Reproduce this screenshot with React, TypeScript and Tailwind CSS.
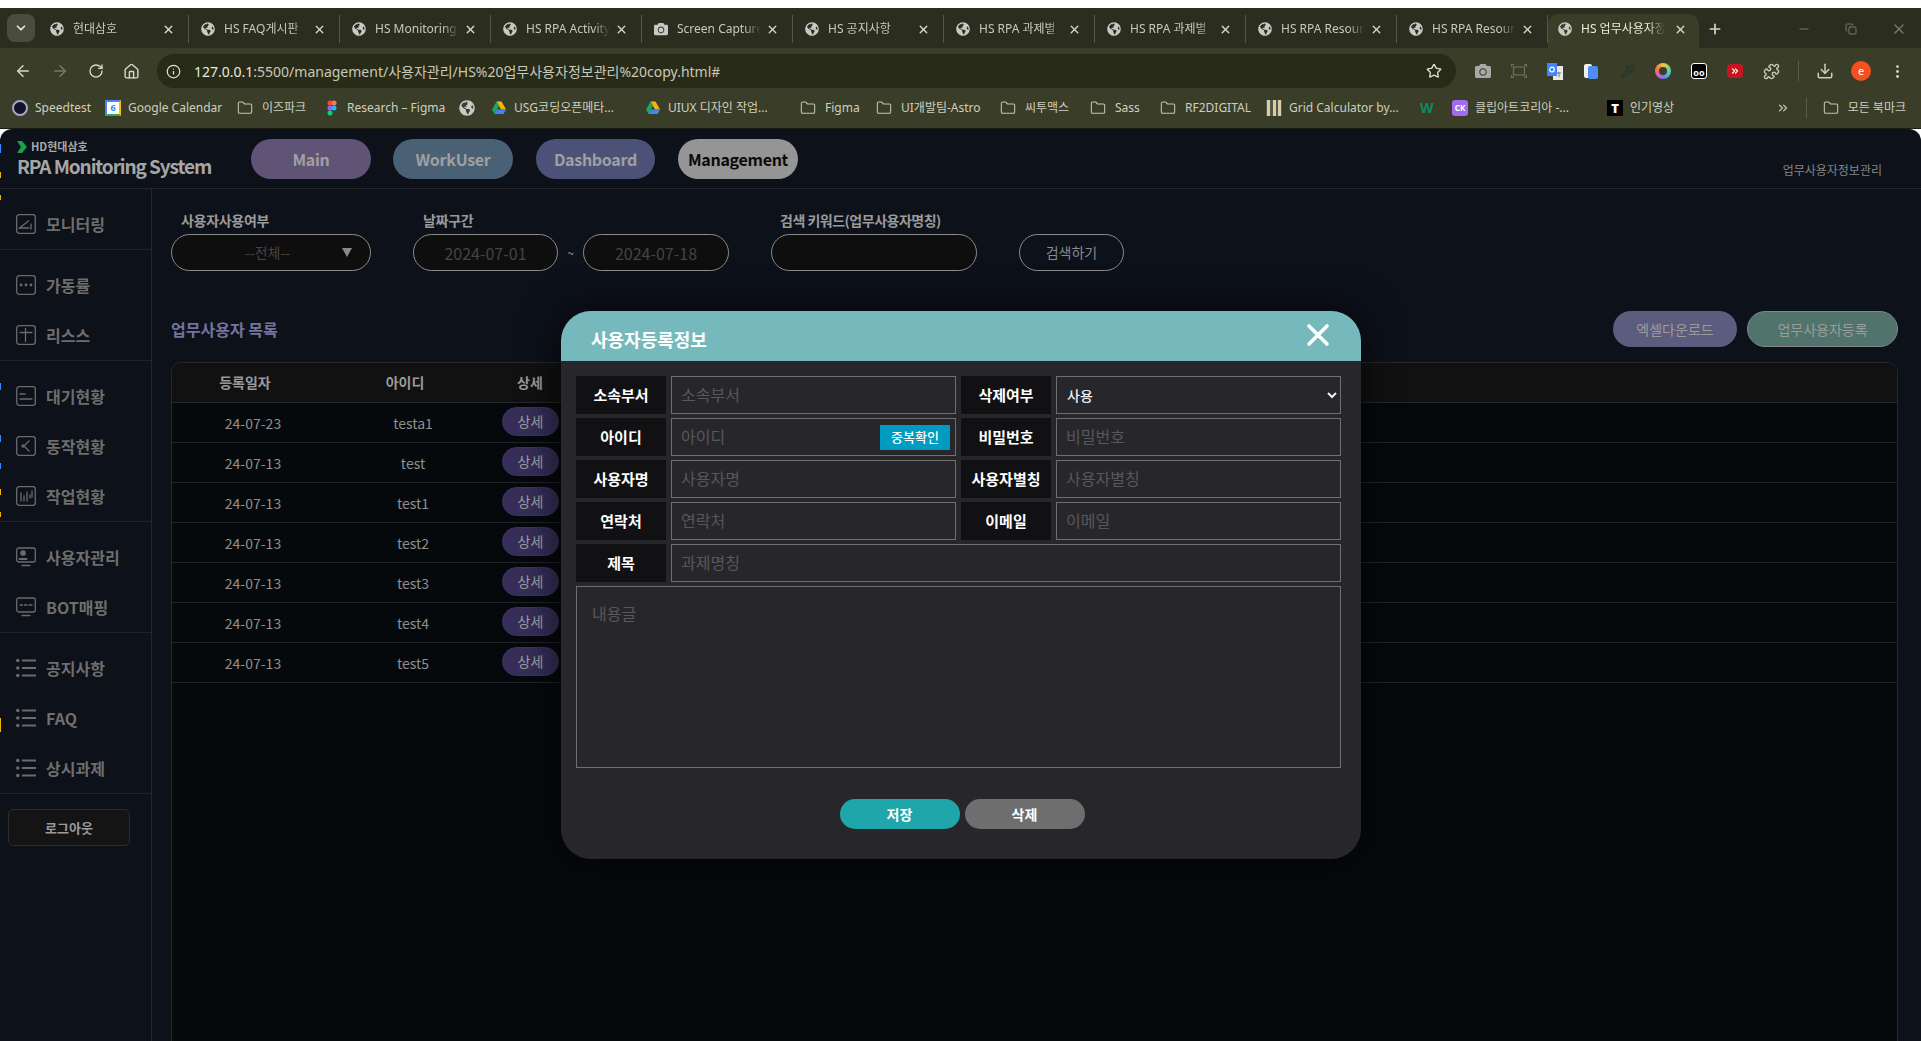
import { ArrowLeft, ArrowRight, Download, EllipsisVertical, Home, Info, Minus, Pipette, Plus, RotateCw, Star, X, Puzzle, Copy, ChevronDown, Folder, ChevronsRight } from 'lucide-react';
import { FaCamera, FaGlobeAmericas } from 'react-icons/fa';

const tabs = ['현대삼호', 'HS FAQ게시판', 'HS Monitoring', 'HS RPA Activity', 'Screen Capture', 'HS 공지사항', 'HS RPA 과제별', 'HS RPA 과제별', 'HS RPA Resource', 'HS RPA Resource'];

const Globe = ({ size = 14 }: { size?: number }) => <FaGlobeAmericas size={size} className="shrink-0 text-[#c8c8c4]" />;

const Tab = ({ title, active, icon }: { title: string; active?: boolean; icon?: React.ReactNode }) => (
  <div className={active ? 'flex h-[34px] w-[151px] items-center self-end rounded-t-[10px] bg-[#3a3d28] pb-[4px] pl-[10px] pr-[12px] text-[#ecebdc]' : 'flex h-[28px] w-[151px] items-center border-r border-[#55574a] pl-[12px] pr-[13px] text-[#c9c9ba]'}>
    {icon ?? <Globe />}
    <span className="ml-[9px] w-[84px] overflow-hidden whitespace-nowrap text-[12px] [mask-image:linear-gradient(to_right,black_80%,transparent)]">{title}</span>
    <X size={13} strokeWidth={2.5} className="ml-auto text-[#d6d6c8]" />
  </div>
);

const FolderIcon = () => <Folder size={16} strokeWidth={1.6} className="mr-[2px] shrink-0 text-[#c4c4b4]" />;

const Drive = () => (
  <svg width="16" height="16" viewBox="0 0 16 16" className="shrink-0">
    <path d="M5.5 1.5h5L15 9.5h-5z" fill="#f6b704" />
    <path d="M5.5 1.5 1 9.5 3.5 14 8 6z" fill="#1fa463" />
    <path d="M3.5 14h9l2.500-4.500H6z" fill="#4285f4" />
  </svg>
);

const bookmarks: { w: string; label?: string; icon: React.ReactNode }[] = [
  { w: 'w-[93px]', label: 'Speedtest', icon: <span className="h-[16px] w-[16px] shrink-0 rounded-full border-2 border-[#a5a8c8] bg-[#12122a]" /> },
  { w: 'w-[132px]', label: 'Google Calendar', icon: <span className="flex h-[16px] w-[16px] shrink-0 items-center justify-center border-2 border-[#4285f4] border-r-[#fbbc04] border-b-[#34a853] bg-white text-[9px] font-bold text-[#4285f4]">6</span> },
  { w: 'w-[87px]', label: '이즈파크', icon: <FolderIcon /> },
  {
    w: 'w-[135px]',
    label: 'Research – Figma',
    icon: (
      <svg width="16" height="16" viewBox="0 0 16 16" className="shrink-0">
        <circle cx="6" cy="3" r="2.500" fill="#f24e1e" />
        <circle cx="10" cy="3" r="2.500" fill="#ff7262" />
        <circle cx="6" cy="8" r="2.500" fill="#a259ff" />
        <circle cx="10" cy="8" r="2.500" fill="#1abcfe" />
        <circle cx="6" cy="13" r="2.500" fill="#0acf83" />
      </svg>
    ),
  },
  { w: 'w-[32px]', icon: <Globe size={16} /> },
  { w: 'w-[154px]', label: 'USG코딩오픈메타...', icon: <Drive /> },
  { w: 'w-[155px]', label: 'UIUX 디자인 작업...', icon: <Drive /> },
  { w: 'w-[76px]', label: 'Figma', icon: <FolderIcon /> },
  { w: 'w-[124px]', label: 'UI개발팀-Astro', icon: <FolderIcon /> },
  { w: 'w-[90px]', label: '씨투맥스', icon: <FolderIcon /> },
  { w: 'w-[70px]', label: 'Sass', icon: <FolderIcon /> },
  { w: 'w-[106px]', label: 'RF2DIGITAL', icon: <FolderIcon /> },
  {
    w: 'w-[154px]',
    label: 'Grid Calculator by...',
    icon: (
      <span className="flex h-[16px] w-[16px] shrink-0 justify-between bg-[#55574a] px-[1px]">
        <span className="w-[3px] bg-[#d8cfa0]" />
        <span className="w-[3px] bg-[#d8cfa0]" />
        <span className="w-[3px] bg-[#d8cfa0]" />
      </span>
    ),
  },
  { w: 'w-[32px]', icon: <span className="w-[16px] text-[14px] font-bold leading-none text-[#0f8a5f]">W</span> },
  { w: 'w-[155px]', label: '클립아트코리아 -...', icon: <span className="flex h-[16px] w-[16px] shrink-0 items-center justify-center rounded-[3px] bg-[#a26bf0] text-[8px] font-bold text-white">CK</span> },
  { w: 'w-[100px]', label: '인기영상', icon: <span className="flex h-[16px] w-[16px] shrink-0 items-center justify-center bg-black text-[13px] font-black leading-none text-white">T</span> },
];

const Box = ({ children }: { children: React.ReactNode }) => (
  <svg width="20" height="20" viewBox="0 0 20 20" fill="none" stroke="#6b6b6b" strokeWidth="1.3" strokeLinecap="round" className="shrink-0">
    <rect x="0.7" y="0.7" width="18.600" height="18.600" rx="2.500" />
    {children}
  </svg>
);

const ScreenIcon = ({ children }: { children: React.ReactNode }) => (
  <svg width="20" height="20" viewBox="0 0 20 20" fill="none" stroke="#6b6b6b" strokeWidth="1.3" strokeLinecap="round" className="shrink-0">
    <rect x="0.7" y="1" width="18.600" height="14" rx="2" />
    <path d="M6 18.500h8" />
    {children}
  </svg>
);

const ListIcon = () => (
  <svg width="20" height="20" viewBox="0 0 20 20" className="shrink-0" fill="#6b6b6b">
    <circle cx="1.800" cy="2.500" r="1.800" />
    <circle cx="1.800" cy="10" r="1.800" />
    <circle cx="1.800" cy="17.500" r="1.800" />
    <rect x="6" y="1.500" width="14" height="2" />
    <rect x="6" y="9" width="14" height="2" />
    <rect x="6" y="16.500" width="14" height="2" />
  </svg>
);

const sideGroups: { label: string; icon: React.ReactNode }[][] = [
  [{ label: '모니터링', icon: <Box><path d="M3.500 14 13 6.500 3.500 14h9.500M15 10v5" /></Box> }],
  [
    {
      label: '가동률',
      icon: (
        <Box>
          <circle cx="5" cy="10" r="1.400" fill="#6b6b6b" stroke="none" />
          <circle cx="10" cy="10" r="1.400" fill="#6b6b6b" stroke="none" />
          <circle cx="15" cy="10" r="1.400" fill="#6b6b6b" stroke="none" />
        </Box>
      ),
    },
    { label: '리스스', icon: <Box><path d="M4 7.500h12M9.500 3.500V16.500" /></Box> },
  ],
  [
    { label: '대기현황', icon: <Box><path d="M4 8h5M4 13h12" /></Box> },
    { label: '동작현황', icon: <Box><path d="m13 5-5 5 5 5" /><circle cx="7" cy="10" r="1" /></Box> },
    { label: '작업현황', icon: <Box><path d="M5 7v8M8 10v5M11 6v9M14 9v3M16 5v6" /></Box> },
  ],
  [
    { label: '사용자관리', icon: <ScreenIcon><circle cx="7" cy="6" r="2.200" fill="#6b6b6b" /><path d="M3.500 12h7" strokeWidth="2" /></ScreenIcon> },
    { label: 'BOT매핑', icon: <ScreenIcon><path d="M4 8h2.500M8.500 8H11M13 8h3" /></ScreenIcon> },
  ],
  [
    { label: '공지사항', icon: <ListIcon /> },
    { label: 'FAQ', icon: <ListIcon /> },
    { label: '상시과제', icon: <ListIcon /> },
  ],
];

const rows = [
  ['24-07-23', 'testa1'],
  ['24-07-13', 'test'],
  ['24-07-13', 'test1'],
  ['24-07-13', 'test2'],
  ['24-07-13', 'test3'],
  ['24-07-13', 'test4'],
  ['24-07-13', 'test5'],
];

const edgeMarks = [
  'top-[144px] h-[9px] bg-[#2f8cff]',
  'top-[172px] h-[6px] bg-[#f0b400]',
  'top-[195px] h-[5px] bg-[#f0b400]',
  'top-[383px] h-[7px] bg-[#2f8cff]',
  'top-[435px] h-[7px] bg-[#2f8cff]',
  'top-[463px] h-[6px] bg-[#2f8cff]',
  'top-[489px] h-[6px] bg-[#f0b400]',
  'top-[512px] h-[5px] bg-[#f0b400]',
  'top-[718px] h-[14px] bg-[#f0b400]',
];

const toolbarIcons: React.ReactNode[] = [
  <FaCamera size={16} className="text-[#a8a8a4]" />,
  <svg width="16" height="14" viewBox="0 0 16 14" fill="none" stroke="#6e705f" strokeWidth="1.2">
    <rect x="2.500" y="3" width="11" height="8" />
    <path d="M0.600 3V0.600H3M13 0.600h2.400V3M0.600 11v2.400H3M13 13.400h2.400V11" />
  </svg>,
  <svg width="16" height="17" viewBox="0 0 16 17">
    <rect x="6" y="3" width="10" height="14" fill="#e8e8e8" />
    <rect width="10" height="13" fill="#4285f4" />
    <circle cx="5" cy="6.500" r="2.300" fill="none" stroke="white" strokeWidth="1.200" />
    <path d="M10 10h4M12 9v5" stroke="#777" strokeWidth="1" />
  </svg>,
  <svg width="14" height="15" viewBox="0 0 14 15">
    <rect width="8" height="14" rx="2" fill="#f0f0f0" />
    <rect x="4" y="2" width="10" height="13" rx="2" fill="#4f8df0" />
  </svg>,
  <Pipette size={15} strokeWidth={2} className="text-[#1e3a2c]" />,
  <span className="flex h-[16px] w-[16px] items-center justify-center rounded-full bg-[conic-gradient(#f6c445,#7ed37a,#45c4d8,#7a6ff0,#e85fa8,#f08040,#f6c445)]">
    <span className="h-[8px] w-[8px] rounded-full bg-[#3a3d28]" />
  </span>,
  <span className="flex h-[16px] w-[16px] items-end justify-center rounded-[3px] border border-white bg-black pb-[1px] text-[9px] font-bold leading-[8px] text-white">oo</span>,
  <span className="flex h-[14px] w-[16px] items-center justify-center rounded-[4px] bg-[#c8141e] text-white">
    <ChevronsRight size={10} strokeWidth={3} />
  </span>,
  <Puzzle size={17} className="text-[#c8c8b0]" />,
];

const FormLabel = ({ children }: { children: React.ReactNode }) => (
  <div className="flex items-center justify-center bg-[#111114] text-[15px] font-bold text-white">{children}</div>
);

const FormInput = ({ placeholder, className }: { placeholder: string; className?: string }) => (
  <input placeholder={placeholder} className={`h-[38px] w-full border border-[#6f6f72] bg-transparent pl-[9px] text-[16px] text-white outline-none placeholder:text-[#58585a] ${className ?? ''}`} />
);

const NavPill = ({ label, className }: { label: string; className: string }) => (
  <button className={`flex h-[40px] items-center justify-center rounded-full text-[16px] font-bold tracking-[-0.3px] ${className}`}>{label}</button>
);

export default function App() {
  return (
    <div className="relative flex h-screen w-full flex-col overflow-hidden bg-white font-['Noto_Sans','Noto_Sans_CJK_KR',sans-serif]">
      {/* browser chrome */}
      <div className="mt-[8px] flex h-[40px] shrink-0 items-end bg-[#2b2e1e] pl-[7px]">
        <div className="mb-[6px] flex h-[28px] w-[28px] items-center justify-center rounded-[8px] bg-[#4a4c3d] text-[#e8e8dc]">
          <ChevronDown size={14} strokeWidth={3} />
        </div>
        <div className="ml-[3px] flex h-[40px] items-center pt-[2px]">
          {tabs.map((t, i) => (
            <Tab key={i} title={t} icon={i === 4 ? <FaCamera size={14} className="shrink-0 text-[#c8c8c4]" /> : undefined} />
          ))}
          <Tab title="HS 업무사용자정보관리" active />
          <Plus size={16} strokeWidth={2.5} className="ml-[8px] text-[#d8d8c8]" />
        </div>
        <div className="mb-[11px] ml-auto flex items-center gap-[34px] pr-[14px] text-[#77796a]">
          <Minus size={14} />
          <Copy size={12} />
          <X size={16} />
        </div>
      </div>
      <div className="flex h-[40px] shrink-0 items-center bg-[#3a3d28] pl-[14px] pr-[6px] pt-[6px]">
        <div className="flex items-center gap-[19px] text-[#d8d8c8]">
          <ArrowLeft size={18} />
          <ArrowRight size={18} className="text-[#77796a]" />
          <RotateCw size={16} />
          <Home size={17} />
        </div>
        <div className="ml-[17px] flex h-[34px] w-[1299px] items-center rounded-full bg-[#282b17] pl-[9px] pr-[14px]">
          <Info size={15} className="text-[#e0e0d0]" />
          <span className="ml-[13px] text-[14px] text-[#e8e8dc]">
            127.0.0.1<span className="text-[#c8c8b8]">:5500/management/사용자관리/HS%20업무사용자정보관리%20copy.html#</span>
          </span>
          <Star size={16} className="ml-auto text-[#e0e0d0]" />
        </div>
        <div className="ml-auto flex items-center">
          {toolbarIcons.map((icon, i) => (
            <div key={i} className="flex w-[36px] justify-center">
              {icon}
            </div>
          ))}
          <div className="flex w-[18px] justify-center">
            <span className="h-[20px] w-px bg-[#5c5e4c]" />
          </div>
          <div className="flex w-[36px] justify-center">
            <Download size={18} className="text-[#d0d0b8]" />
          </div>
          <div className="flex w-[36px] justify-center">
            <span className="flex h-[20px] w-[20px] items-center justify-center rounded-full bg-[#f4511e] text-[11px] text-white">e</span>
          </div>
          <div className="flex w-[36px] justify-center">
            <EllipsisVertical size={17} className="text-[#d8d8c8]" />
          </div>
        </div>
      </div>
      <div className="flex h-[41px] shrink-0 items-center border-b border-[#1a1b12] bg-[#3a3d28] pl-[12px] pr-[15px] text-[12px] text-[#cfcfbf]">
        {bookmarks.map((b, i) => (
          <div key={i} className={`flex items-center gap-[7px] ${b.w}`}>
            {b.icon}
            {b.label && <span className="whitespace-nowrap">{b.label}</span>}
          </div>
        ))}
        <div className="ml-auto flex items-center gap-[16px]">
          <ChevronsRight size={14} />
          <span className="h-[20px] w-px bg-[#5c5e4c]" />
          <div className="flex items-center gap-[7px]">
            <FolderIcon />
            <span className="whitespace-nowrap">모든 북마크</span>
          </div>
        </div>
      </div>

      {/* app */}
      <div className="relative flex min-h-0 flex-1 flex-col overflow-hidden rounded-t-[12px] bg-[#0d111a] font-['Noto_Sans_CJK_KR',sans-serif]">
        <header className="flex h-[60px] shrink-0 items-center border-b border-[#24272e] pl-[17px] pr-[39px]">
          <div className="w-[234px]">
            <div className="flex items-center gap-[4px] text-[11px] font-bold leading-[15px] text-[#a8a8a8]">
              <svg width="10" height="12" viewBox="0 0 10 12">
                <path d="M0 0h5l5 6-5 6H0l4-6z" fill="#16a34a" />
              </svg>
              HD현대삼호
            </div>
            <div className="whitespace-nowrap text-[19px] font-bold leading-[24px] tracking-[-1.1px] text-[#a6a6a6]">RPA Monitoring System</div>
          </div>
          <div className="flex">
            <NavPill label="Main" className="w-[120px] bg-[#5f5476] text-[#a0a0a0]" />
            <NavPill label="WorkUser" className="ml-[22px] w-[120px] bg-[#4a6075] text-[#a0a0a0]" />
            <NavPill label="Dashboard" className="ml-[23px] w-[119px] bg-[#4c5277] text-[#a0a0a0]" />
            <NavPill label="Management" className="ml-[23px] w-[120px] bg-[#959595] text-[#0a0a0a]" />
          </div>
          <span className="ml-auto mt-[22px] text-[12px] text-[#858585]">업무사용자정보관리</span>
        </header>

        <div className="flex min-h-0 flex-1">
          <aside className="w-[152px] shrink-0 border-r border-[#24272e]">
            {sideGroups.map((group, i) => (
              <div key={i} className="border-b border-[#1f2229] pt-[10px]">
                {group.map((item) => (
                  <div key={item.label} className="flex h-[50px] items-center gap-[10px] pl-[16px] text-[16px] font-bold text-[#6e6e6e]">
                    {item.icon}
                    {item.label}
                  </div>
                ))}
              </div>
            ))}
            <button className="ml-[8px] mt-[15px] flex h-[37px] w-[122px] items-center justify-center rounded-[5px] border border-[#2c2c2c] bg-[#141414] text-[13px] font-bold text-[#9a9a9a]">로그아웃</button>
          </aside>

          <main className="flex min-w-0 flex-1 flex-col pl-[19px] pr-[23px] pt-[20px]">
            <div className="flex items-end text-[14px]">
              <div>
                <div className="h-[25px] pl-[10px] pt-[1px] font-bold tracking-[-0.3px] text-[#9a9a9a]">사용자사용여부</div>
                <div className="flex h-[37px] w-[200px] items-center rounded-full border border-[#8c8c8c] bg-[#0e0e0f] pl-[73px] pr-[18px] text-[#454545]">
                  --전체--
                  <svg width="10" height="9" viewBox="0 0 10 9" className="ml-auto">
                    <path d="M0 0h10L5 9z" fill="#8a8a8a" />
                  </svg>
                </div>
              </div>
              <div className="ml-[42px]">
                <div className="h-[25px] pl-[10px] pt-[1px] font-bold tracking-[-0.3px] text-[#9a9a9a]">날짜구간</div>
                <div className="flex items-center">
                  <div className="flex h-[37px] w-[145px] items-center justify-center rounded-full border border-[#8c8c8c] bg-[#0e0e0f] text-[16px] text-[#444]">2024-07-01</div>
                  <span className="w-[25px] text-center text-[12px] text-[#a8a8a8]">~</span>
                  <div className="flex h-[37px] w-[146px] items-center justify-center rounded-full border border-[#8c8c8c] bg-[#0e0e0f] text-[16px] text-[#444]">2024-07-18</div>
                </div>
              </div>
              <div className="ml-[42px]">
                <div className="h-[25px] pl-[9px] pt-[1px] font-bold tracking-[-0.5px] text-[#9a9a9a]">검색 키워드(업무사용자명칭)</div>
                <div className="h-[37px] w-[206px] rounded-full border border-[#8c8c8c] bg-[#0e0e0f]" />
              </div>
              <button className="ml-[42px] h-[37px] w-[105px] rounded-full border border-[#8c8c8c] text-[14px] text-[#8a8a8a]">검색하기</button>
            </div>

            <div className="mt-[40px] flex h-[36px] items-center">
              <h2 className="text-[16px] font-bold text-[#76719f]">업무사용자 목록</h2>
              <button className="ml-auto h-[36px] w-[124px] rounded-full bg-[#5c5c7e] text-[14px] text-[#9c9c9c]">엑셀다운로드</button>
              <button className="ml-[10px] h-[36px] w-[151px] rounded-full border border-[#858585] bg-[#50736b] text-[14px] text-[#9c9c9c]">업무사용자등록</button>
            </div>

            <div className="mt-[15px] min-h-0 flex-1 rounded-t-[10px] border border-b-0 border-[#26282c] bg-[#06090c]">
              <div className="grid h-[40px] grid-cols-[146px_174px_76px] items-center rounded-t-[10px] border-b border-[#26282c] bg-[#111111] text-center text-[14px] font-bold text-[#9a9a9a]">
                <div>등록일자</div>
                <div>아이디</div>
                <div>상세</div>
              </div>
              {rows.map(([date, id], i) => (
                <div key={i} className="grid h-[40px] grid-cols-[162px_158px_78px] border-b border-[#22242a] text-center text-[14px] text-[#8f8f8f]">
                  <div className="pt-[10px]">{date}</div>
                  <div className="pt-[10px]">{id}</div>
                  <div className="pl-[10px] pt-[4px] text-left">
                    <button className="h-[29px] w-[57px] rounded-full border border-[#3d3560] bg-[#362e58] text-[14px] text-[#a0a0a0]">상세</button>
                  </div>
                </div>
              ))}
            </div>
          </main>
        </div>
      </div>

      {edgeMarks.map((c) => (
        <span key={c} className={`absolute left-0 w-px ${c}`} />
      ))}

      {/* dialog */}
      <div className="absolute left-[561px] top-[311px] flex h-[548px] w-[800px] flex-col overflow-hidden rounded-[30px] bg-[#27272b] shadow-[0_0_40px_rgba(0,0,0,0.75)]">
        <div className="flex h-[50px] shrink-0 items-center bg-[#76b9bc] pl-[30px] pr-[31px]">
          <span className="mt-[8px] text-[18px] font-bold text-white">사용자등록정보</span>
          <svg width="24" height="24" viewBox="0 0 24 24" className="-mt-[2px] ml-auto" stroke="white" strokeWidth="3.600" strokeLinecap="round">
            <path d="M3 3l18 18M21 3 3 21" />
          </svg>
        </div>
        <div className="pl-[15px] pr-[20px] pt-[15px]">
          <div className="grid grid-cols-[90px_285px_90px_285px] gap-x-[5px] gap-y-[4px]">
            <FormLabel>소속부서</FormLabel>
            <FormInput placeholder="소속부서" />
            <FormLabel>삭제여부</FormLabel>
            <select className="h-[38px] w-full border border-[#6f6f72] bg-transparent pl-[6px] text-[14px] font-medium text-[#eee] outline-none">
              <option>사용</option>
            </select>

            <FormLabel>아이디</FormLabel>
            <div className="relative">
              <FormInput placeholder="아이디" />
              <button className="absolute right-[6px] top-[7px] h-[25px] w-[70px] bg-[#009bc1] text-[13px] font-medium text-white">중복확인</button>
            </div>
            <FormLabel>비밀번호</FormLabel>
            <FormInput placeholder="비밀번호" />

            <FormLabel>사용자명</FormLabel>
            <FormInput placeholder="사용자명" />
            <FormLabel>사용자별칭</FormLabel>
            <FormInput placeholder="사용자별칭" />

            <FormLabel>연락처</FormLabel>
            <FormInput placeholder="연락처" />
            <FormLabel>이메일</FormLabel>
            <FormInput placeholder="이메일" />

            <FormLabel>제목</FormLabel>
            <div className="col-span-3">
              <FormInput placeholder="과제명칭" />
            </div>
          </div>
          <textarea placeholder="내용글" className="mt-[4px] block h-[182px] w-[765px] resize-none border border-[#6f6f72] bg-transparent px-[15px] pb-[11px] pt-[15px] text-[16px] text-white outline-none placeholder:text-[#58585a]" />
          <div className="mt-[31px] flex justify-center gap-[5px] pl-[7px]">
            <button className="h-[30px] w-[120px] rounded-full bg-[#1fa6aa] text-[14px] font-bold text-white">저장</button>
            <button className="h-[30px] w-[120px] rounded-full bg-[#6e6e6e] text-[14px] font-bold text-white">삭제</button>
          </div>
        </div>
      </div>
    </div>
  );
}
